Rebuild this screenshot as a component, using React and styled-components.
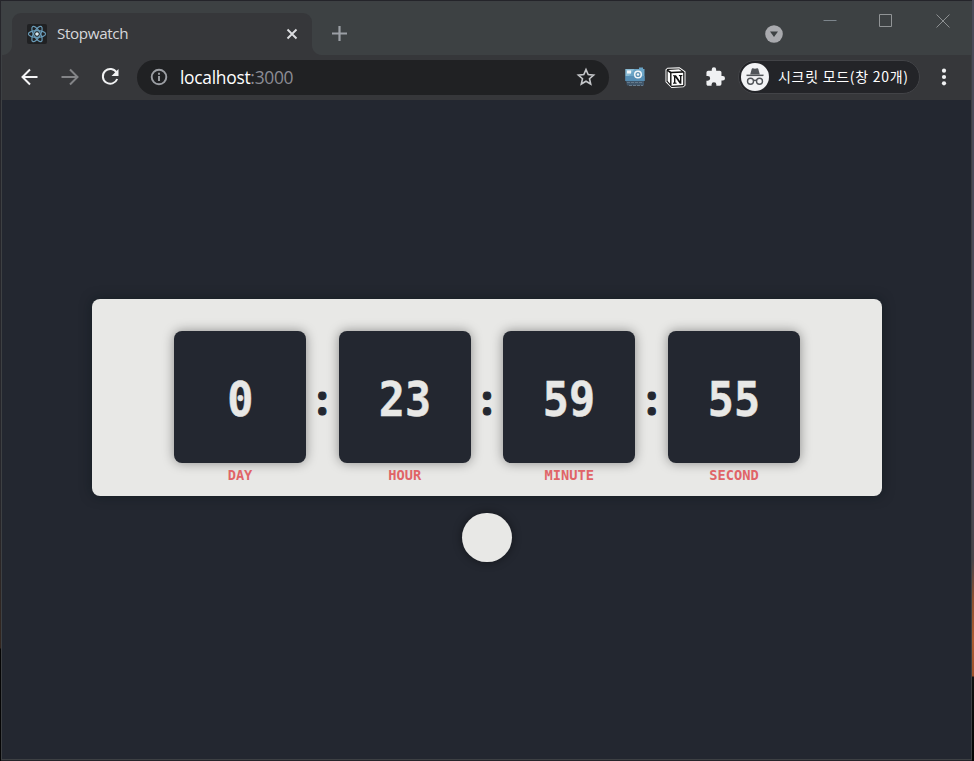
import React from 'react';
import styled, { createGlobalStyle } from 'styled-components';

const Global = createGlobalStyle`
  * { box-sizing: border-box; }
  body { margin: 0; background: #17181d; font-family: "Open Sans", "Noto Sans CJK KR", sans-serif; }
  svg { display: block; flex: none; }
`;
const Desktop = styled.div`
  width: 974px;
  height: 761px;
  padding: 1px 2px 1px 1px;
  overflow: hidden;
  background:
    linear-gradient(to bottom, #4b4a58 0 480px, #49444a 560px, #8e5030 600px, #ac5c32 640px, #a0522c 676px, #111 677px, #050505 761px) right / 2px 761px no-repeat,
    linear-gradient(to bottom, #26262b 0 500px, #33261f 648px, #050505 649px) left / 1px 761px no-repeat,
    #24242a;
`;
const Window = styled.div`
  height: 759px;
  display: flex;
  flex-direction: column;
  border: 1px solid #3d4043;
  background: #232730;
`;
const TitleBar = styled.header`
  height: 53px;
  flex: none;
  display: flex;
  align-items: flex-end;
  background: #3d4143;
`;
const TabFoot = styled.div`
  width: 10px;
  height: 10px;
  background: radial-gradient(circle at ${p => (p.$right ? '100% 0' : '0 0')}, #3d4143 9.5px, #36373a 10.5px);
`;
const Tab = styled.div`
  width: 300px;
  height: 42px;
  padding: 0 13px 1px 15px;
  display: flex;
  align-items: center;
  border-radius: 9px 9px 0 0;
  background: #36373a;
`;
const Favicon = styled.span`
  width: 20px;
  height: 20px;
  border-radius: 2px;
  background: #202123;
`;
const TabTitle = styled.span`
  flex: 1;
  padding: 0 0 2px 10px;
  font-size: 15.2px;
  letter-spacing: -0.35px;
  line-height: 20px;
  color: #d6d7da;
`;
const NewTab = styled.div`
  height: 43px;
  margin-left: 9px;
  display: flex;
  align-items: center;
`;
const Controls = styled.div`
  height: 53px;
  margin-left: auto;
  display: flex;
  align-items: flex-start;
`;
const Control = styled.span`
  padding-top: ${p => p.$top}px;
  margin-right: ${p => p.$after}px;
`;
const Toolbar = styled.div`
  height: 45px;
  flex: none;
  display: flex;
  align-items: center;
  padding: 0 0 1px 18px;
  background: #36373a;
`;
const Nav = styled.div`
  width: 117px;
  display: flex;
  gap: 20px;
`;
const Address = styled.div`
  width: 472px;
  height: 35px;
  display: flex;
  align-items: center;
  padding: 0 13px;
  border-radius: 18px;
  background: #202123;
`;
const Url = styled.div`
  flex: 1;
  padding-left: 12px;
  font-size: 17.4px;
  letter-spacing: -0.28px;
  line-height: 24px;
  color: #fff;
  span { color: #8b8c94; }
`;
const Extensions = styled.div`
  display: flex;
  align-items: center;
  gap: 20px;
  margin-left: 16px;
`;
const Incognito = styled.div`
  width: 182px;
  height: 34px;
  margin-left: 13px;
  padding-left: 2px;
  display: flex;
  align-items: center;
  gap: 9px;
  border: 1px solid #424347;
  border-radius: 17px;
  background: #232428;
  color: #fff;
  font-family: "Noto Sans CJK KR", sans-serif;
  white-space: nowrap;
`;
const IncognitoText = styled.span`
  padding-bottom: 2px;
  font-size: 14px;
  line-height: 20px;
  letter-spacing: 0.72px;
`;
const Menu = styled.span`margin-left: 13px;`;
const Page = styled.main`
  flex: 1;
  display: flex;
  flex-direction: column;
  align-items: center;
  padding: 199px 0 0 1px;
`;
const Clock = styled.section`
  width: 790px;
  height: 197px;
  display: flex;
  justify-content: center;
  padding: 32px 0 0 0;
  border-radius: 8px;
  background: #e8e8e6;
  box-shadow: 0 0 12px rgba(8, 20, 24, 0.5);
`;
const Unit = styled.div`
  width: 132px;
  display: flex;
  flex-direction: column;
  align-items: center;
`;
const Face = styled.div`
  width: 132px;
  height: 132px;
  display: flex;
  align-items: center;
  justify-content: center;
  border-radius: 8px;
  background: #232730;
  box-shadow: 0 0 12px rgba(0, 0, 0, 0.4);
`;
const Digits = styled.span`
  font: 700 48px/60px "DejaVu Sans Mono", monospace;
  color: #e8e8e6;
  -webkit-text-stroke: 0.5px #e8e8e6;
  transform: translateY(2px) scaleX(0.905);
`;
const Label = styled.span`
  margin-top: 4px;
  font: 700 13.7px/17px "DejaVu Sans Mono", monospace;
  color: #e06467;
`;
const Colon = styled.span`
  width: 32.67px;
  height: 132px;
  display: flex;
  align-items: center;
  justify-content: center;
  font: 700 40px/60px "Noto Sans Mono CJK KR", "Noto Sans CJK KR", sans-serif;
  color: #232730;
  -webkit-text-stroke: 1px #232730;
`;
const StartButton = styled.button`
  width: 50px;
  height: 49px;
  margin-top: 17px;
  padding: 0;
  border: 0;
  border-radius: 25px;
  background: #e8e8e6;
  box-shadow: 0 0 10px rgba(0, 0, 0, 0.45);
`;

const ReactMark = () => (
  <svg width="20" height="20" viewBox="0 0 20 20" fill="none" stroke="#699bb8" strokeWidth="1.2">
    <ellipse cx="10" cy="10" rx="8.6" ry="3.3" />
    <ellipse cx="10" cy="10" rx="8.6" ry="3.3" transform="rotate(60 10 10)" />
    <ellipse cx="10" cy="10" rx="8.6" ry="3.3" transform="rotate(120 10 10)" />
    <circle cx="10" cy="10" r="1.8" fill="#d9edf5" stroke="none" />
  </svg>
);
const Camera = () => (
  <svg width="20" height="20" viewBox="0 0 20 20">
    <path d="M14 .5h4V2h1.500v12H.5V2H14z" fill="#6aa4c6" />
    <path d="M.5 2h9L4 9H.5z" fill="#8abbd4" />
    <path d="M.5 9h19v5H.5z" fill="#568eb4" />
    <rect x="2" y="3.500" width="4" height="3" fill="#f2f6f8" />
    <circle cx="13" cy="7.500" r="3.300" fill="#5f93b4" stroke="#f2f6f8" strokeWidth="1.500" />
    <circle cx="13" cy="7.500" r="1.200" fill="#f2f6f8" />
    <path d="M1 14h18v4.500H2z" fill="#40566a" />
    <path d="M2 15.500h16M4 18.500h14" stroke="#65798a" strokeWidth="1" strokeDasharray="3 1" />
  </svg>
);
const Notion = () => (
  <svg width="21" height="21" viewBox="0 0 21 21">
    <path d="M2.500.8 14.500.3 20.500 4.500v14L18.500 20.300l-12 .6L.5 15V2.500z" fill="#fff" />
    <path d="M2.500 1.800 14.500 1.400 19.500 5v13.300l-1.300 1.200L6.500 20 1.500 14.500V3z" fill="#111" />
    <path d="m3.200 2.900 10.800-.6 2.800 1.900-10.500.6zM2.600 4.300l2.500 2v10.500l-2.500-2.900zM6.500 6.300l11.700-.6v12.400l-11.700.6z" fill="#fff" />
    <path d="M8 8.300h3l4 5.700V9.300l-1.100-.3V8h3.400v1l-.9.300v7.500h-1.600l-4.400-6.300v5l1.200.3v1H8v-1l1-.3V9.400L8 9.100z" fill="#111" />
  </svg>
);
const Spy = () => (
  <svg width="28" height="28" viewBox="0 0 28 28">
    <circle cx="14" cy="14" r="14" fill="#f2f3f5" />
    <path d="m9.200 11.500 1.500-5.500q.3-.9 1.200-.7l2.100.5 2.100-.5q.9-.2 1.200.7l1.500 5.500z" fill="#505459" />
    <path d="M5.500 11.600h17v1.500h-17z" fill="#505459" />
    <g fill="none" stroke="#505459" strokeWidth="1.400"><circle cx="9.500" cy="18.200" r="3" /><circle cx="18.500" cy="18.200" r="3" /><path d="M12.500 17.700q1.500-.8 3 0" /></g>
  </svg>
);

const units = [['0', 'DAY'], ['23', 'HOUR'], ['59', 'MINUTE'], ['55', 'SECOND']];

export default function App() {
  return (
    <Desktop>
      <Global />
      <Window>
        <TitleBar>
          <TabFoot />
          <Tab>
            <Favicon><ReactMark /></Favicon>
            <TabTitle>Stopwatch</TabTitle>
            <svg width="14" height="14" viewBox="0 0 14 14" stroke="#dcdde0" strokeWidth="1.900"><path d="m2.500 2.500 9 9m0-9-9 9" /></svg>
          </Tab>
          <TabFoot $right />
          <NewTab><svg width="17" height="17" viewBox="0 0 17 17" stroke="#9b9fa5" strokeWidth="2.200"><path d="M8.500 1v15M1 8.500h15" /></svg></NewTab>
          <Controls>
            <Control $top={23} $after={40}><svg width="18" height="18"><circle cx="9" cy="9" r="8.800" fill="#a9aaae" /><path d="M5 6.500h8l-4 5.500z" fill="#3d4143" /></svg></Control>
            <Control $top={12} $after={42}><svg width="14" height="14"><path d="M.5 6.500h13" stroke="#7d858c" /></svg></Control>
            <Control $top={12} $after={43}><svg width="14" height="14" fill="none" stroke="#919496"><path d="M.5.5h12v12H.5z" /></svg></Control>
            <Control $top={12} $after={21}><svg width="14" height="14" fill="none" stroke="#8d9092"><path d="m.5.5 13 13m0-13-13 13" /></svg></Control>
          </Controls>
        </TitleBar>
        <Toolbar>
          <Nav>
            <svg width="20" height="20" viewBox="0 0 20 20" fill="none" stroke="#f4f4f5" strokeWidth="2"><path d="M17.500 10H3M10 2.500 2.500 10l7.500 7.500" /></svg>
            <svg width="20" height="20" viewBox="0 0 20 20" fill="none" stroke="#838487" strokeWidth="2"><path d="M1.500 10H17M10 2.500l7.500 7.500-7.500 7.500" /></svg>
            <svg width="20" height="20" viewBox="0 0 20 20" fill="none" stroke="#f1f2f3" strokeWidth="2"><path d="M16.600 5.500A7.400 7.400 0 1 0 17.200 12" /><path d="M18.500 2v7h-7z" fill="#f1f2f3" stroke="none" /></svg>
          </Nav>
          <Address>
            <svg width="18" height="18" viewBox="0 0 18 18" fill="none" stroke="#9c9fa4" strokeWidth="1.900"><circle cx="9" cy="9" r="7.300" /><path d="M9 8v5M9 4.800v1.900" /></svg>
            <Url>localhost<span>:3000</span></Url>
            <svg width="20" height="20" viewBox="0 0 20 20" fill="none" stroke="#c4c6c9" strokeWidth="1.600"><path d="m10 2.600 2.200 5 5.400.5-4.100 3.600 1.200 5.300-4.700-2.800L5.300 17l1.200-5.300-4.100-3.600 5.400-.5z" /></svg>
          </Address>
          <Extensions>
            <Camera />
            <Notion />
            <svg width="19" height="20" viewBox="1.500 1.500 21.500 21" fill="#f0f1f3"><path d="M20.500 11H19V7c0-1.100-.9-2-2-2h-4V3.500a2.500 2.500 0 0 0-5 0V5H4a2 2 0 0 0-2 2v3.800h1.500a2.700 2.700 0 0 1 0 5.400H2V20c0 1.100.9 2 2 2h3.800v-1.500a2.700 2.700 0 0 1 5.400 0V22H17a2 2 0 0 0 2-2v-4h1.500a2.500 2.500 0 0 0 0-5z" /></svg>
          </Extensions>
          <Incognito><Spy /><IncognitoText>시크릿 모드(창 20개)</IncognitoText></Incognito>
          <Menu><svg width="20" height="20" fill="#f1f2f3"><circle cx="11" cy="3.700" r="2.100" /><circle cx="11" cy="10" r="2.100" /><circle cx="11" cy="16.300" r="2.100" /></svg></Menu>
        </Toolbar>
        <Page>
          <Clock>
            {units.map(([value, label], i) => (
              <React.Fragment key={label}>
                {i > 0 && <Colon>:</Colon>}
                <Unit>
                  <Face><Digits>{value}</Digits></Face>
                  <Label>{label}</Label>
                </Unit>
              </React.Fragment>
            ))}
          </Clock>
          <StartButton aria-label="Start" />
        </Page>
      </Window>
    </Desktop>
  );
}
